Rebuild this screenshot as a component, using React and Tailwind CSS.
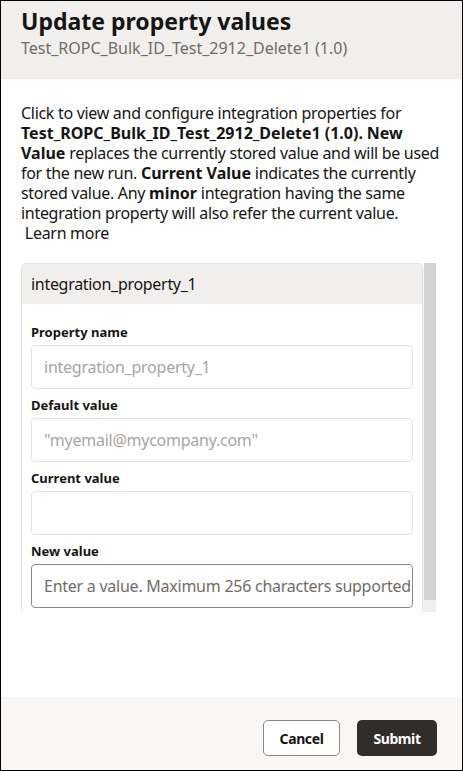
import React from "react";

const font = { fontFamily: '"Noto Sans", "Open Sans", Arial, sans-serif' };

function B({ children }) {
  return <b className="font-bold tracking-normal">{children}</b>;
}

function Field({ label, value, active }) {
  return (
    <div>
      <div className="pt-[6px] pb-[3px] text-[13px] leading-[20px] font-bold text-[#161513]">{label}</div>
      <div
        className={
          "h-[44px] rounded-[4px] border flex items-center px-[12px] text-[16px] tracking-[-0.25px] whitespace-nowrap overflow-hidden " +
          (active ? "border-[#8b8885] text-[#6f6c69]" : "border-[#e4e2e0] text-[#a8a5a2]")
        }
      >
        {value}
      </div>
    </div>
  );
}

export default function App() {
  return (
    <div style={font} className="w-[463px] h-[771px] border border-black bg-white flex flex-col text-[#161513] overflow-hidden">
      <div className="h-[78px] bg-[#f1efed] px-[20px] pt-[4px] shrink-0">
        <div className="text-[23px] leading-[32px] font-bold">Update property values</div>
        <div className="text-[16px] leading-[20px] text-[#6f6c69] mt-[1px]">Test_ROPC_Bulk_ID_Test_2912_Delete1 (1.0)</div>
      </div>

      <div className="flex-1 pl-[20px] pr-[20px] pt-[24px]">
        <p className="text-[16px] leading-[20px] tracking-[-0.3px]">
          Click to view and configure integration properties for <B>Test_ROPC_Bulk_ID_Test_2912_Delete1 (1.0).</B>{" "}
          <B>New Value</B> replaces the currently stored value and will be used for the new run. <B>Current Value</B>{" "}
          indicates the currently stored value. Any <B>minor</B> integration having the same integration property will also refer the current value.
          <br />
          &nbsp;Learn more
        </p>

        <div className="mt-[20px] flex h-[349px]">
          <div className="w-[402px] border-l border-r border-t border-[#e4e2e0] rounded-t-[5px] overflow-hidden">
            <div className="h-[40px] bg-[#f1efed] flex items-center px-[9px] text-[16px] tracking-[-0.3px]">integration_property_1</div>
            <div className="px-[9px] pt-[12px]">
              <Field label="Property name" value="integration_property_1" />
              <Field label="Default value" value={'"myemail@mycompany.com"'} />
              <Field label="Current value" value="" />
              <Field label="New value" value="Enter a value. Maximum 256 characters supported" active />
            </div>
          </div>
          <div className="w-[13px] flex flex-col border-l border-[#f4f4f4]">
            <div className="h-[337px] bg-[#d4d4d4]"></div>
            <div className="flex-1 bg-[#efefef]"></div>
          </div>
        </div>
      </div>

      <div className="h-[73px] shrink-0 bg-[#f8f7f6] flex justify-end items-start gap-[17px] pt-[23px] pr-[25px]">
        <button className="w-[77px] h-[36px] rounded-[5px] border border-[#8b8885] bg-white text-[14px] tracking-[-0.4px] font-bold text-[#161513]">Cancel</button>
        <button className="w-[80px] h-[36px] rounded-[5px] bg-[#312d2a] text-[14px] tracking-[-0.4px] font-bold text-white">Submit</button>
      </div>
    </div>
  );
}
